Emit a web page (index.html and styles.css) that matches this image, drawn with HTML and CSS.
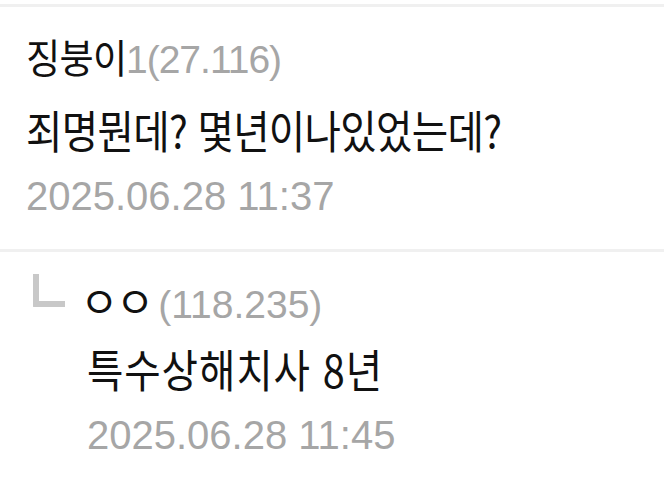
FILE: index.html
```html
<!DOCTYPE html>
<html lang="ko">
<head>
<meta charset="utf-8">
<link rel="stylesheet" href="styles.css">
</head>
<body>
<section class="comments">
  <article class="comment">
    <div class="meta"><span class="nick">징붕이</span><span class="ip ip-tight">1(27.116)</span></div>
    <p class="text">죄명뭔데? 몇년이나있었는데?</p>
    <div class="date">2025.06.28 11:37</div>
  </article>
  <article class="comment reply">
    <span class="reply-mark"></span>
    <div class="reply-body">
      <div class="meta"><span class="nick-jamo">ㅇㅇ</span><span class="ip ip-gap">(118.235)</span></div>
      <p class="text text-reply">특수상해치사 8년</p>
      <div class="date">2025.06.28 11:45</div>
    </div>
  </article>
</section>
</body>
</html>
```
FILE: styles.css
```css
html, body {
  margin: 0;
  padding: 0;
  background: #ffffff;
}

body {
  padding-top: 4px;
  font-family: "Liberation Sans", "Noto Sans CJK KR", sans-serif;
  color: #111111;
}

.comments {
  display: flex;
  flex-direction: column;
}

.comment {
  border-top: 3px solid #f0f0f0;
  padding: 27px 0 31px 26px;
}

.reply {
  display: flex;
  align-items: flex-start;
  padding: 27px 0 30px 33px;
}

.reply-mark {
  flex: none;
  width: 26px;
  height: 27px;
  margin-top: -5px;
  margin-right: 22px;
  border-left: 6px solid #c8c8c8;
  border-bottom: 6px solid #c8c8c8;
  border-bottom-left-radius: 1px;
}

.reply-body {
  display: flex;
  flex-direction: column;
}

.meta {
  display: flex;
  align-items: baseline;
  height: 44px;
  line-height: 44px;
  white-space: nowrap;
}

/* The reference face is a narrow Hangul gothic; Noto is squeezed to match. */
.nick {
  font-family: "Noto Sans CJK KR", sans-serif;
  font-size: 40px;
  letter-spacing: -0.8px;
  color: #111111;
  transform: scaleX(0.93);
  transform-origin: left center;
  margin-right: -8px;
}

.nick-jamo {
  font-family: "Noto Sans CJK KR", sans-serif;
  font-size: 42px;
  line-height: 42px;
  letter-spacing: -3px;
  margin-left: -7px;
  color: #111111;
}

.ip {
  font-family: "Liberation Sans", sans-serif;
  font-size: 39px;
  color: #a6a6a6;
}

.ip-tight {
  letter-spacing: -1px;
}

.ip-gap {
  margin-left: 7px;
}

.text {
  margin: 30px 0 0;
  height: 44px;
  line-height: 44px;
  font-family: "Noto Sans CJK KR", sans-serif;
  font-size: 45px;
  letter-spacing: -0.8px;
  white-space: nowrap;
  color: #111111;
  transform: scaleX(0.88);
  transform-origin: left center;
}

.reply .text {
  margin-top: 24px;
}

.text-reply {
  letter-spacing: 1px;
}

.date {
  margin-top: 22px;
  height: 44px;
  line-height: 44px;
  font-size: 40px;
  color: #a6a6a6;
  white-space: nowrap;
}

.reply .date {
  margin-top: 22px;
}
```
